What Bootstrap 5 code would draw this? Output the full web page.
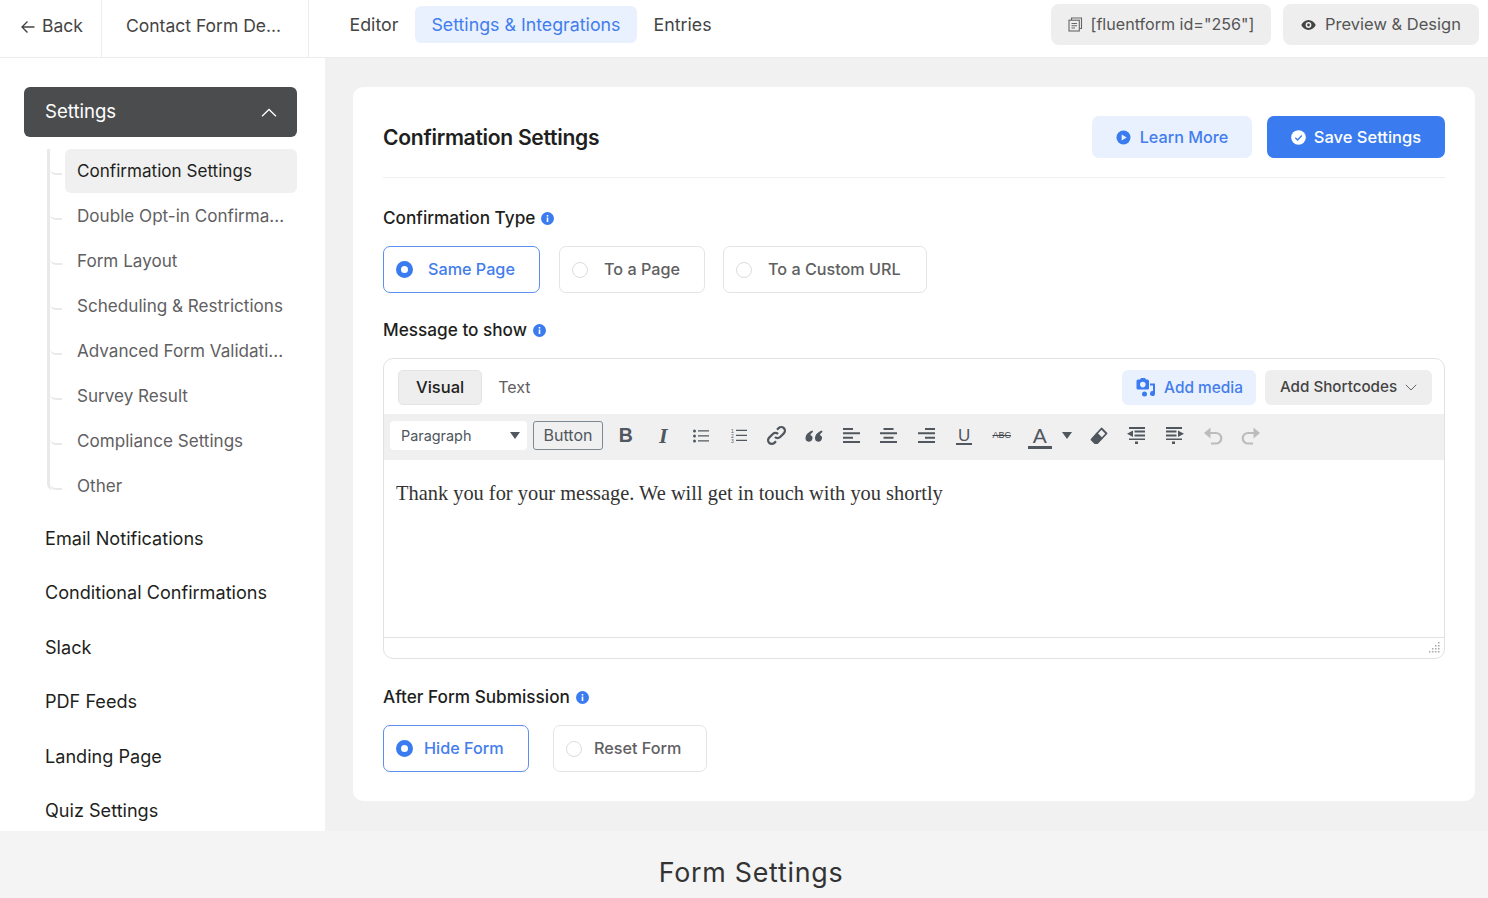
<!DOCTYPE html>
<html lang="en">
<head>
    <meta charset="UTF-8">
    <meta name="viewport" content="width=device-width, initial-scale=1.0">
    <title>Form Settings</title>
    <link href="https://cdn.jsdelivr.net/npm/bootstrap@5.3.0/dist/css/bootstrap.min.css" rel="stylesheet">
    <style>
        html, body { height: 100%; }
        body { font-family: Inter, "Liberation Sans", sans-serif; color: #1e1f21; background: #fff; overflow: hidden; }
        .page { width: 1488px; height: 898px; }

        /* top bar */
        .topbar { height: 58px; border-bottom: 1px solid #ececec; font-size: 17.5px; color: #444; }
        .top-back { width: 102px; height: 57px; border-right: 1px solid #ececec; padding: 0 0 4px 20px; color: #444; gap: 6px; }
        .top-title { width: 207px; height: 57px; border-right: 1px solid #ececec; padding: 0 0 4px 24px; color: #444; }
        .top-tabs { margin-left: 24px; margin-top: -9px; gap: 0; font-size: 17.8px; }
        .top-tab { height: 37px; padding: 0 16.5px; border-radius: 6px; color: #444; line-height: 37px; }
        .top-tab.on { background: #e9f1fe; color: #437ded; }
        .top-btn { height: 41px; background: #eeeeee; border-radius: 8px; color: #555; font-size: 16.5px; gap: 8px; margin-top: -8px; }
        .short-btn { width: 220px; margin-right: 12px; font-size: 16.1px; }
        .prev-btn { width: 196px; margin-right: 9px; gap: 9px; }

        /* sidebar */
        .body-row { height: 773px; }
        .side { width: 325px; padding: 29px 28px 0 24px; background: #fff; flex-shrink: 0; overflow: hidden; font-size: 18.1px; }
        .side-head { height: 50px; background: #4b4c4d; border-radius: 6px; color: #fff; padding: 0 20px 0 21px; font-size: 18.6px; }
        .side-sub { margin: 12px 0 0 23px; padding-left: 15px; border-left: 3px solid #e9e9e9; height: 341px; border-bottom-left-radius: 6px; font-size: 17.1px; color: #5f6062; }
        .side-sub-item { height: 44px; line-height: 44px; margin-bottom: 1px; padding-left: 12px; padding-right: 12px; white-space: nowrap; position: relative; border-radius: 6px; }
        .side-sub-item::before { content: ""; position: absolute; left: -15px; top: 20px; width: 12px; height: 6px; border-bottom: 2px solid #e9e9e9; border-bottom-left-radius: 10px; }
        .side-sub-item.on { background: #f0f0f0; color: #1e1f21; }
        .side-top { height: 54.4px; line-height: 54.4px; padding-left: 21px; color: #1e1f21; white-space: nowrap; }
        .side-top.first { margin-top: 21px; }

        /* main */
        .main-area { background: #f1f1f1; padding: 29px 13px 0 28px; flex-grow: 1; }
        .panel { background: #fff; border-radius: 10px; height: 714px; padding: 29px 30px 0 30px; }
        .panel-head { height: 42px; }
        .panel-title { font-size: 21.1px; font-weight: 600; letter-spacing: -0.3px; color: #1e1f21; margin: 2px 0 0 0; }
        .act-btn { height: 42px; border-radius: 7px; font-size: 16.5px; font-weight: 500; gap: 8px; }
        .learn-btn { width: 160px; background: #e9f1fe; color: #437ded; margin-right: 15px; font-size: 16.2px; gap: 9px; }
        .save-btn { width: 178px; background: #3b7bf0; color: #fff; }
        .panel-rule { height: 1px; background: #f0f0f0; margin: 19px 0 0 0; }

        .lbl { font-size: 17.2px; font-weight: 500; color: #1e1f21; gap: 6px; height: 24px; }
        .info-dot { width: 13px; height: 13px; flex-shrink: 0; }
        .lbl-type { margin-top: 28px; }
        .lbl-msg { margin-top: 25px; }
        .lbl-after { margin-top: 26px; }
        .radio-row { margin-top: 16px; }
        .radio-box { height: 47px; border: 1px solid #e4e4e4; border-radius: 7px; color: #5f6062; font-size: 16.2px; font-weight: 500; }
        .radio-box.on { border-color: #5c8fee; color: #437ded; }
        .radio-dot { width: 16px; height: 16px; border: 1px solid #dcdcdc; border-radius: 50%; background: #fff; flex-shrink: 0; }
        .radio-box.on .radio-dot { border: 5px solid #3b7bf0; width: 17px; height: 17px; }

        /* editor */
        .editor { margin-top: 16px; height: 301px; border: 1px solid #e2e2e2; border-radius: 10px; }
        .ed-top { height: 55px; padding: 11px 12px 0 14px; }
        .ed-tab { height: 35px; line-height: 33px; padding: 0 17px; border: 1px solid #e4e4e4; border-radius: 5px; background: #eeeeee; font-size: 16.5px; font-weight: 500; }
        .ed-tab.off { background: none; border-color: transparent; color: #5f6062; font-weight: 400; font-size: 16px; padding: 0 17px 0 15px; }
        .media-btn { width: 134px; height: 35px; background: #e9f1fe; color: #437ded; border-radius: 6px; font-size: 15.4px; font-weight: 500; gap: 8px; margin-right: 9px; }
        .codes-btn { width: 167px; height: 35px; background: #eeeeee; color: #444; border-radius: 6px; font-size: 15.2px; font-weight: 500; gap: 8px; }
        .ed-bar { height: 46px; background: #f0f0f1; padding: 7px 0 0 6px; margin-top: 0; }
        .para-sel { width: 137px; height: 29px; background: #fff; border-radius: 4px; padding: 0 7px 0 11px; font-size: 14.4px; color: #50575e; }
        .caret-down { width: 0; height: 0; border-left: 5px solid transparent; border-right: 5px solid transparent; border-top: 7px solid #50575e; }
        .wp-btn { width: 70px; height: 29px; line-height: 27px; margin-left: 6px; border: 1px solid #7e8993; border-radius: 3px; text-align: center; font-size: 16px; color: #50575e; }
        .tool-row { margin-left: 4px; height: 29px; }
        .tool { width: 37.6px; height: 29px; color: #50575e; }
        .tool svg { display: block; }
        .tool-a { width: 38.4px; }
        .tool-caret { width: 16px; margin-right: 5px; }
        .tool-nudge { margin-left: 1px; }
        .t-b { font-family: "Liberation Sans", sans-serif; font-weight: 700; font-size: 19.5px; }
        .t-i { font-family: "Liberation Serif", serif; font-style: italic; font-weight: 700; font-size: 22px; }
        .t-u { font-family: "Liberation Sans", sans-serif; font-size: 17px; border-bottom: 2px solid #50575e; line-height: 15px; padding: 0 2px; margin-top: 2px; }
        .t-abc { font-family: "Liberation Sans", sans-serif; font-size: 9px; text-decoration: line-through; color: #3f454a; }
        .t-a { font-family: "Liberation Sans", sans-serif; font-size: 21px; line-height: 20px; border-bottom: 3px solid #50575e; padding: 0 5px; margin-top: 3px; }
        .ed-text { height: 178px; padding: 20px 12px 0 12px; font-family: "Liberation Serif", serif; font-size: 20.4px; line-height: 26px; color: #333; border-bottom: 1px solid #e2e2e2; }
        .ed-foot { height: 20px; padding: 0 4px 0 0; }

        .foot-bar { height: 67px; background: #f4f4f4; font-size: 26.8px; letter-spacing: 0.75px; color: #333; padding: 16px 0 0 14px; }
    </style>
</head>
<body>
<div class="page d-flex flex-column">
    <!-- top bar -->
    <div class="topbar d-flex align-items-center flex-shrink-0">
        <div class="top-back d-flex align-items-center">
            <svg width="16" height="16" viewBox="0 0 16 16" fill="none" stroke="#444" stroke-width="1.4"><path d="M14.5 8H2M7.5 2.5 2 8l5.5 5.5"/></svg>
            <span>Back</span>
        </div>
        <div class="top-title d-flex align-items-center">Contact Form De...</div>
        <div class="top-tabs d-flex">
            <div class="top-tab">Editor</div>
            <div class="top-tab on">Settings &amp; Integrations</div>
            <div class="top-tab">Entries</div>
        </div>
        <div class="top-btn short-btn d-flex align-items-center justify-content-center ms-auto">
            <svg width="15" height="15" viewBox="0 0 15 15" fill="none" stroke="#666" stroke-width="1.1"><path d="M3.5 3V1h10v10.5h-2"/><rect x="1" y="3.2" width="10.3" height="10.8"/><path d="M3.5 6.5h5.5M3.5 8.8h5.5M3.5 11h3.5"/></svg>
            <span>[fluentform id="256"]</span>
        </div>
        <div class="top-btn prev-btn d-flex align-items-center justify-content-center">
            <svg width="15" height="12" viewBox="0 0 15 12"><path fill="#444" fill-rule="evenodd" d="M7.5 1C4.2 1 1.6 3.200.3 6c1.300 2.800 3.900 5 7.200 5s5.900-2.200 7.200-5C13.400 3.200 10.800 1 7.500 1Zm0 2.100a2.900 2.900 0 1 1 0 5.800 2.900 2.900 0 0 1 0-5.800Zm0 1.500a1.400 1.400 0 1 0 0 2.800 1.400 1.400 0 0 0 0-2.800Z"/></svg>
            <span>Preview &amp; Design</span>
        </div>
    </div>

    <div class="body-row d-flex">
        <!-- sidebar -->
        <div class="side">
            <div class="side-head d-flex align-items-center justify-content-between">
                <span>Settings</span>
                <svg width="16" height="9" viewBox="0 0 16 9" fill="none" stroke="#fff" stroke-width="1.3"><path d="M1 8.200 8 1.500l7 6.700"/></svg>
            </div>
            <div class="side-sub">
                <div class="side-sub-item on">Confirmation Settings</div>
                <div class="side-sub-item">Double Opt-in Confirma...</div>
                <div class="side-sub-item">Form Layout</div>
                <div class="side-sub-item">Scheduling &amp; Restrictions</div>
                <div class="side-sub-item">Advanced Form Validati...</div>
                <div class="side-sub-item">Survey Result</div>
                <div class="side-sub-item">Compliance Settings</div>
                <div class="side-sub-item">Other</div>
            </div>
            <div class="side-top first">Email Notifications</div>
            <div class="side-top">Conditional Confirmations</div>
            <div class="side-top">Slack</div>
            <div class="side-top">PDF Feeds</div>
            <div class="side-top">Landing Page</div>
            <div class="side-top">Quiz Settings</div>
        </div>

        <!-- main -->
        <div class="main-area">
            <div class="panel">
                <div class="panel-head d-flex align-items-center">
                    <h1 class="panel-title">Confirmation Settings</h1>
                    <div class="act-btn learn-btn d-flex align-items-center justify-content-center ms-auto">
                        <svg width="15" height="15" viewBox="0 0 15 15"><circle cx="7.500" cy="7.500" r="7" fill="#3b7bf0"/><path d="M5.700 4.500v6l5-3z" fill="#e9f1fe"/></svg>
                        <span>Learn More</span>
                    </div>
                    <div class="act-btn save-btn d-flex align-items-center justify-content-center">
                        <svg width="15" height="15" viewBox="0 0 15 15"><circle cx="7.500" cy="7.500" r="7.300" fill="#fff"/><path d="M4.300 7.700l2.300 2.300 4.200-4.500" fill="none" stroke="#3b7bf0" stroke-width="1.400"/></svg>
                        <span>Save Settings</span>
                    </div>
                </div>
                <div class="panel-rule"></div>

                <div class="lbl lbl-type d-flex align-items-center">
                    <span>Confirmation Type</span>
                    <svg class="info-dot" viewBox="0 0 13 13"><circle cx="6.500" cy="6.500" r="6.500" fill="#3b7bf0"/><rect x="5.700" y="5.500" width="1.600" height="4.500" fill="#fff"/><rect x="5.700" y="3" width="1.600" height="1.600" fill="#fff"/></svg>
                </div>
                <div class="radio-row d-flex">
                    <div class="radio-box on d-flex align-items-center" style="width:157px;padding-left:12px;gap:15px;margin-right:19px"><span class="radio-dot"></span><span>Same Page</span></div>
                    <div class="radio-box d-flex align-items-center" style="width:146px;padding-left:12px;gap:16px;margin-right:18px"><span class="radio-dot"></span><span>To a Page</span></div>
                    <div class="radio-box d-flex align-items-center" style="width:204px;padding-left:12px;gap:16px"><span class="radio-dot"></span><span>To a Custom URL</span></div>
                </div>

                <div class="lbl lbl-msg d-flex align-items-center">
                    <span>Message to show</span>
                    <svg class="info-dot" viewBox="0 0 13 13"><circle cx="6.500" cy="6.500" r="6.500" fill="#3b7bf0"/><rect x="5.700" y="5.500" width="1.600" height="4.500" fill="#fff"/><rect x="5.700" y="3" width="1.600" height="1.600" fill="#fff"/></svg>
                </div>

                <div class="editor">
                    <div class="ed-top d-flex">
                        <div class="ed-tab">Visual</div>
                        <div class="ed-tab off">Text</div>
                        <div class="media-btn d-flex align-items-center justify-content-center ms-auto">
                            <svg width="21" height="20" viewBox="0 0 21 20"><path fill="#3b7bf0" fill-rule="evenodd" d="M3 1.500h2L6 0h4l1 1.500h1.500A1.500 1.500 0 0 1 14 3v7a1.500 1.500 0 0 1-1.500 1.500H3A1.500 1.500 0 0 1 1.500 10V3A1.500 1.500 0 0 1 3 1.500Zm4.800 2.300a2.800 2.800 0 1 0 0 5.600 2.800 2.800 0 0 0 0-5.600Z"/><path fill="#3b7bf0" d="M15 5.500h5V15.500a2.500 2.500 0 1 1-2-2.400V7.500h-3z"/><circle cx="9.500" cy="16" r="2.500" fill="#3b7bf0"/></svg>
                            <span>Add media</span>
                        </div>
                        <div class="codes-btn d-flex align-items-center justify-content-center">
                            <span>Add Shortcodes</span>
                            <svg width="12" height="7" viewBox="0 0 12 7" fill="none" stroke="#666" stroke-width="1"><path d="M.8.800 6 6 11.200.800"/></svg>
                        </div>
                    </div>

                    <div class="ed-bar d-flex">
                        <div class="para-sel d-flex align-items-center justify-content-between"><span>Paragraph</span><span class="caret-down"></span></div>
                        <div class="wp-btn">Button</div>
                        <div class="tool-row d-flex">
                            <div class="tool d-flex align-items-center justify-content-center"><span class="t-b">B</span></div>
                            <div class="tool d-flex align-items-center justify-content-center"><span class="t-i">I</span></div>
                            <div class="tool d-flex align-items-center justify-content-center">
                                <svg width="16" height="14" viewBox="0 0 16 14" fill="#50575e"><circle cx="1.500" cy="2" r="1.500"/><circle cx="1.500" cy="7" r="1.500"/><circle cx="1.500" cy="12" r="1.500"/><path d="M5 1.300h11v1.200H5zM5 6.300h11v1.200H5zM5 11.300h11v1.200H5z"/></svg>
                            </div>
                            <div class="tool d-flex align-items-center justify-content-center">
                                <svg width="16" height="15" viewBox="0 0 16 15" fill="#50575e"><text x="0" y="4.500" font-size="5" font-family="Liberation Sans">1</text><text x="0" y="9.500" font-size="5" font-family="Liberation Sans">2</text><text x="0" y="14.500" font-size="5" font-family="Liberation Sans">3</text><path d="M5 1.800h11V3H5zM5 6.800h11V8H5zM5 11.800h11V13H5z"/></svg>
                            </div>
                            <div class="tool d-flex align-items-center justify-content-center">
                                <svg width="21" height="21" viewBox="0 0 20 20" fill="none" stroke="#50575e" stroke-width="2.100"><path d="M8.500 11.500a3.500 3.500 0 0 0 5 0l3.500-3.500a3.500 3.500 0 0 0-5-5L10.500 4.500"/><path d="M11.500 8.500a3.500 3.500 0 0 0-5 0L3 12a3.500 3.500 0 0 0 5 5l1.500-1.500"/></svg>
                            </div>
                            <div class="tool d-flex align-items-center justify-content-center">
                                <svg width="18" height="14" viewBox="0 0 18 13" fill="#50575e"><path d="M7.500 1C3.500 2.500 .5 5 .5 8.800A3.500 3.500 0 1 0 5.300 5.500C5.700 4.300 6.500 3.300 8 2.400zM17 1c-4 1.500-7 4-7 7.800a3.500 3.500 0 1 0 4.800-3.300c.4-1.200 1.200-2.200 2.700-3.100z"/></svg>
                            </div>
                            <div class="tool d-flex align-items-center justify-content-center">
                                <svg width="17" height="15" viewBox="0 0 17 15" fill="#50575e"><path d="M0 0h10v2H0zM0 4.300h17v2H0zM0 8.700h10v2H0zM0 13h17v2H0z"/></svg>
                            </div>
                            <div class="tool d-flex align-items-center justify-content-center">
                                <svg width="17" height="15" viewBox="0 0 17 15" fill="#50575e"><path d="M3.500 0h10v2h-10zM0 4.300h17v2H0zM3.500 8.700h10v2h-10zM0 13h17v2H0z"/></svg>
                            </div>
                            <div class="tool d-flex align-items-center justify-content-center">
                                <svg width="17" height="15" viewBox="0 0 17 15" fill="#50575e"><path d="M7 0h10v2H7zM0 4.300h17v2H0zM7 8.700h10v2H7zM0 13h17v2H0z"/></svg>
                            </div>
                            <div class="tool d-flex align-items-center justify-content-center"><span class="t-u">U</span></div>
                            <div class="tool d-flex align-items-center justify-content-center"><span class="t-abc">ABC</span></div>
                            <div class="tool tool-a d-flex align-items-center justify-content-center"><span class="t-a">A</span></div>
                            <div class="tool tool-caret d-flex align-items-center justify-content-center"><span class="caret-down"></span></div>
                            <div class="tool d-flex align-items-center justify-content-center">
                                <svg width="18" height="18" viewBox="0 0 18 18" fill="none" stroke="#50575e" stroke-width="1.800" stroke-linejoin="round"><path d="M11.500 1.500 16.500 6.500 7.500 16 5 16 1.500 12.500z"/><path d="M7 6.500 11.500 11.200 7.500 15.500 5.200 15.500 2.300 12.500z" fill="#50575e"/></svg>
                            </div>
                            <div class="tool d-flex align-items-center justify-content-center">
                                <svg width="18" height="17" viewBox="0 0 18 17" fill="#50575e"><path d="M2 0h16v2H2zM7.500 3.600H18v2H7.500zM6 3.500v6.500L0 6.800zM7.500 7.500H18v2H7.500zM2 11.500h16v1.600H2zM8 14.500h3V17H8z"/></svg>
                            </div>
                            <div class="tool tool-nudge d-flex align-items-center justify-content-center">
                                <svg width="18" height="17" viewBox="0 0 18 17" fill="#50575e"><path d="M0 0h16v2H0zM0 3.600h10.500v2H0zM12 3.500v6.500l6-3.200zM0 7.500h10.500v2H0zM0 11.500h16v1.600H0zM6 14.500h3V17H6z"/></svg>
                            </div>
                            <div class="tool d-flex align-items-center justify-content-center">
                                <svg width="20" height="18" viewBox="0 0 20 18" fill="none" stroke="#bcbcbc" stroke-width="2.200"><path d="M5 6h8a5 5 0 0 1 0 10.500H8"/><path d="M7.500 .5 1 6l6.500 5.500z" fill="#bcbcbc" stroke="none"/></svg>
                            </div>
                            <div class="tool tool-nudge d-flex align-items-center justify-content-center">
                                <svg width="20" height="18" viewBox="0 0 20 18" fill="none" stroke="#bcbcbc" stroke-width="2.200"><path d="M15 6H7a5 5 0 0 0 0 10.500h5"/><path d="M12.500 .5 19 6l-6.500 5.500z" fill="#bcbcbc" stroke="none"/></svg>
                            </div>
                        </div>
                    </div>

                    <div class="ed-text">Thank you for your message. We will get in touch with you shortly</div>
                    <div class="ed-foot d-flex align-items-center justify-content-end">
                        <svg width="12" height="12" viewBox="0 0 12 12" fill="#a8a8a8"><path d="M10 0h1.500v1.500H10zM10 3h1.500v1.500H10zM7 3h1.500v1.500H7zM10 6h1.500v1.500H10zM7 6h1.500v1.500H7zM4 6h1.500v1.500H4zM10 9h1.500v1.500H10zM7 9h1.500v1.500H7zM4 9h1.500v1.500H4zM1 9h1.500v1.500H1z"/></svg>
                    </div>
                </div>

                <div class="lbl lbl-after d-flex align-items-center">
                    <span>After Form Submission</span>
                    <svg class="info-dot" viewBox="0 0 13 13"><circle cx="6.500" cy="6.500" r="6.500" fill="#3b7bf0"/><rect x="5.700" y="5.500" width="1.600" height="4.500" fill="#fff"/><rect x="5.700" y="3" width="1.600" height="1.600" fill="#fff"/></svg>
                </div>
                <div class="radio-row d-flex">
                    <div class="radio-box on d-flex align-items-center" style="width:146px;padding-left:12px;gap:11px;margin-right:24px"><span class="radio-dot"></span><span>Hide Form</span></div>
                    <div class="radio-box d-flex align-items-center" style="width:154px;padding-left:12px;gap:12px"><span class="radio-dot"></span><span>Reset Form</span></div>
                </div>
            </div>
        </div>
    </div>

    <div class="foot-bar d-flex align-items-center justify-content-center flex-shrink-0">Form Settings</div>
</div>
<script src="https://cdn.jsdelivr.net/npm/bootstrap@5.3.0/dist/js/bootstrap.bundle.min.js"></script>
</body>
</html>
